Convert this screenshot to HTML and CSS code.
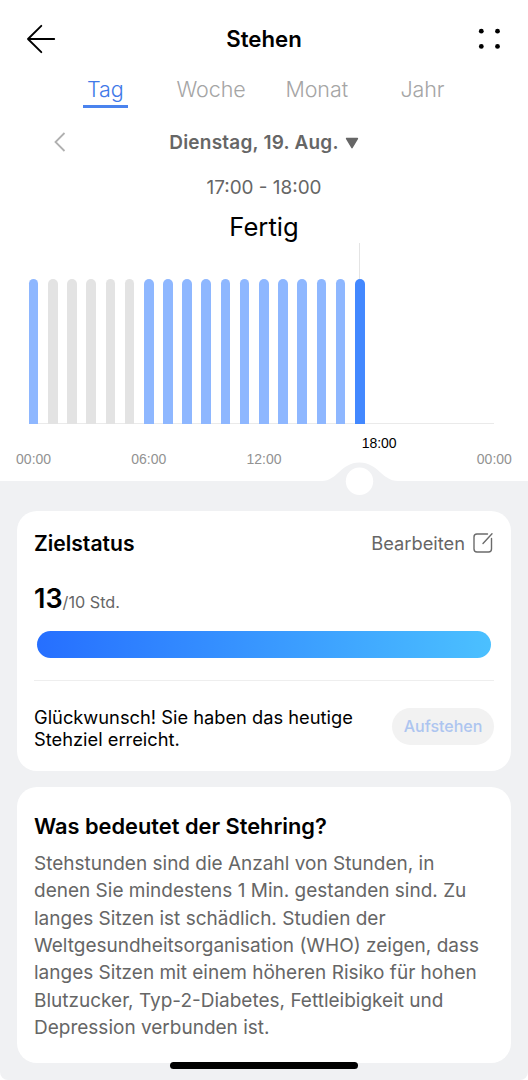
FILE: index.html
```
<!DOCTYPE html>
<html lang="de">
<head>
<meta charset="utf-8">
<meta name="viewport" content="width=device-width, initial-scale=1">
<title>Stehen</title>
<link rel="stylesheet" href="styles.css">
</head>
<body>
<div class="screen">
  <section class="panel">
    <header class="topbar">
      <svg class="back" width="30" height="30" viewBox="0 0 30 30"><path d="M28.200 15H2M15.300 1.800 2 15l13.300 13.200" fill="none" stroke="#000" stroke-width="1.900" stroke-linecap="round" stroke-linejoin="round"/></svg>
      <h1 class="title">Stehen</h1>
      <svg class="more" width="22" height="22" viewBox="0 0 22 22"><circle cx="3.300" cy="3.200" r="2.400"/><circle cx="19.500" cy="3.200" r="2.400"/><circle cx="3.300" cy="18.400" r="2.400"/><circle cx="19.500" cy="18.400" r="2.400"/></svg>
    </header>
    <nav class="tabs">
      <a class="tab active"><span>Tag</span></a>
      <a class="tab"><span>Woche</span></a>
      <a class="tab"><span>Monat</span></a>
      <a class="tab"><span>Jahr</span></a>
    </nav>
    <div class="date-row">
      <svg class="prev" width="12" height="20" viewBox="0 0 12 20"><path d="M10.500 1 1.500 10l9 9" fill="none" stroke="#b0b0b0" stroke-width="1.800"/></svg>
      <div class="date"><span>Dienstag, 19. Aug.</span><svg width="14" height="12" viewBox="0 0 14 12"><path d="M1.600 1.500h10.800L7 10.700z" fill="#666" stroke="#666" stroke-width="1.500" stroke-linejoin="round"/></svg></div>
    </div>
    <div class="time">17:00 - 18:00</div>
    <div class="state">Fertig</div>
    <div class="chart">
      <i class="bar on"></i><i class="bar"></i><i class="bar"></i><i class="bar"></i><i class="bar"></i><i class="bar"></i>
      <i class="bar on"></i><i class="bar on"></i><i class="bar on"></i><i class="bar on"></i><i class="bar on"></i><i class="bar on"></i>
      <i class="bar on"></i><i class="bar on"></i><i class="bar on"></i><i class="bar on"></i><i class="bar on"></i><i class="bar selected"></i>
    </div>
    <div class="axis">
      <span>00:00</span><span>06:00</span><span>12:00</span><span class="current">18:00</span><span>00:00</span>
    </div>
    <svg class="handle" width="76" height="36" viewBox="0 0 76 36"><path d="M0 20C15 20 19 1.500 37.500 1.500S60 20 76 20V36H0z" fill="#f0f1f3"/><circle cx="37.500" cy="20.300" r="13.700" fill="#fff"/></svg>
  </section>

  <section class="card goal">
    <div class="goal-head">
      <h2>Zielstatus</h2>
      <div class="edit"><span>Bearbeiten</span><svg width="22" height="22" viewBox="0 0 22 22"><path d="M15.500 2H5Q2 2 2 5v12q0 3 3 3h11.500q3 0 3-3V6.500M11 11.400 20 1.800" fill="none" stroke="#6b6b6b" stroke-width="1.400" stroke-linecap="round"/></svg></div>
    </div>
    <div class="amount"><b>13</b><span>/10 Std.</span></div>
    <div class="progress"></div>
    <div class="result">
      <p>Glückwunsch! Sie haben das heutige<br>Stehziel erreicht.</p>
      <button class="stand">Aufstehen</button>
    </div>
  </section>

  <section class="card info">
    <h2>Was bedeutet der Stehring?</h2>
    <p>Stehstunden sind die Anzahl von Stunden, in<br>denen Sie mindestens 1 Min. gestanden sind. Zu<br>langes Sitzen ist schädlich. Studien der<br>Weltgesundheitsorganisation (WHO) zeigen, dass<br>langes Sitzen mit einem höheren Risiko für hohen<br>Blutzucker, Typ-2-Diabetes, Fettleibigkeit und<br>Depression verbunden ist.</p>
  </section>
  <div class="home"></div>
</div>
</body>
</html>
```
FILE: styles.css
```
* { box-sizing: border-box; }
body { margin: 0; background: #fff; font-family: Inter, "Liberation Sans", sans-serif; color: #000; }
h1, h2, p { margin: 0; }
svg { display: block; flex: none; }
.screen { position: relative; width: 528px; height: 1080px; overflow: hidden; background: #f0f1f3; border-radius: 0 0 8px 8px; white-space: nowrap; }

.panel { position: relative; height: 481px; background: #fff; }
.topbar { display: grid; grid-template-columns: 60px 1fr 60px; align-items: center; height: 77px; }
.back { margin-left: 25.500px; margin-top: 1px; }
.title { text-align: center; font-size: 22.200px; font-weight: 600; line-height: 30px; padding-top: 1px; }
.more { margin-left: 10px; margin-top: 1px; }

.tabs { display: grid; grid-template-columns: repeat(4, 105.700px); margin-left: 52.500px; height: 32px; }
.tab { display: flex; justify-content: center; font-size: 21.500px; font-weight: 300; line-height: 24px; color: #a5a5a5; }
.tab:not(.active) { letter-spacing: -0.1px; }
.tab.active { color: #4079e8; }
.tab.active span { width: 45px; height: 31px; text-align: center; border-bottom: 3px solid #4a83ee; }

.date-row { display: grid; grid-template-columns: 54px 1fr 54px; align-items: center; height: 67px; }
.prev { margin-left: 53.500px; margin-top: -1px; }
.date { display: flex; justify-content: center; align-items: center; gap: 6px; font-size: 19px; font-weight: 600; letter-spacing: 0.22px; color: #666; }
.time { height: 24px; line-height: 24px; text-align: center; font-size: 18.900px; color: #666; }
.state { height: 43px; line-height: 54px; text-align: center; font-size: 25.600px; }

.chart { position: relative; display: flex; align-items: flex-end; gap: 9.600px; height: 181px; margin: 0 34px 0 28.800px; border-bottom: 1px solid #eaeaea; }
.bar { width: 9.600px; height: 145px; margin-bottom: -1px; border-radius: 5px 5px 0 0; background: #e3e3e3; }
.bar.on { background: #8eb7ff; }
.bar.selected { position: relative; background: #4388ff; }
.bar.selected::before { content: ""; position: absolute; left: 4px; top: -36px; width: 1px; height: 36px; background: #e4e4e4; }

.axis { display: grid; grid-template-columns: repeat(5, 115.200px); margin-left: -24px; font: 14px/16px "Liberation Sans", Arial, sans-serif; color: #929292; padding-top: 27px; text-align: center; }
.axis .current { position: relative; top: -16px; color: #000; }
.handle { position: absolute; left: 322px; top: 461px; }

.card { margin: 0 17px; padding: 0 17px; border-radius: 20px; background: #fff; }
.goal { height: 260px; margin-top: 30px; }
.goal-head { display: flex; justify-content: space-between; align-items: center; height: 64px; }
h2 { font-size: 21.800px; font-weight: 600; }
.goal-head h2 { font-size: 21.100px; }
.edit { display: flex; align-items: center; gap: 7px; font-size: 18.300px; color: #666; }
.amount { height: 56px; line-height: 48px; }
.amount b { font-size: 27px; font-weight: 600; }
.amount span { font-size: 16.200px; color: #666; }
.progress { height: 27px; margin: 0 3px; border-radius: 14px; background: linear-gradient(90deg, #266fff, #4bc0ff); }
.result { display: flex; justify-content: space-between; align-items: center; height: 91px; margin-top: 22px; border-top: 1px solid #eee; }
.result p { padding-top: 3px; font-size: 18.300px; line-height: 22px; }
.stand { width: 102px; height: 37px; padding: 0; border: 0; border-radius: 19px; background: #f2f2f2; color: #adc5f0; font: 500 16px Inter, sans-serif; }
.info { height: 276px; margin-top: 16px; padding-top: 25px; }
.info h2 { line-height: 28px; }
.info p { margin-top: 10px; font-size: 19px; line-height: 27.350px; color: #666; }
.home { position: absolute; left: 170px; top: 1062px; width: 188px; height: 7px; border-radius: 4px; background: #000; }
```
